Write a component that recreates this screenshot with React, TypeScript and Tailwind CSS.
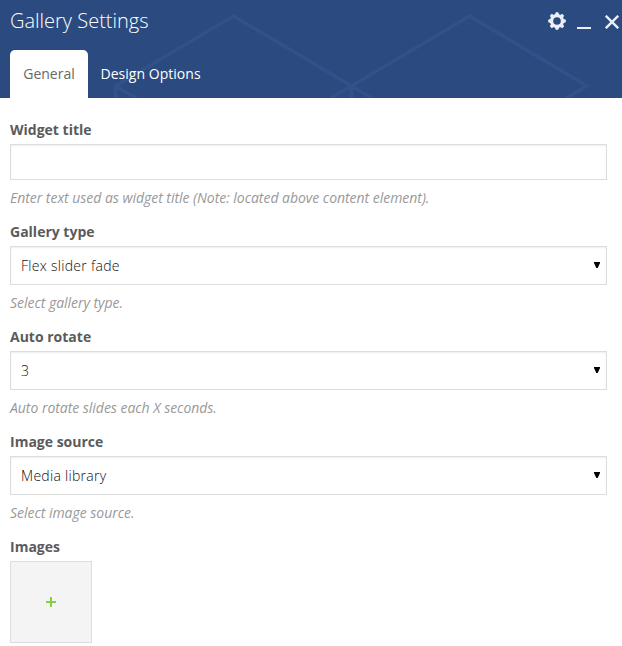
import React from 'react';

type FieldProps = { label: string; hint?: string; children: React.ReactNode };

function Field({ label, hint, children }: FieldProps) {
  return (
    <div>
      <div className="mb-[5px] h-[18px] text-sm leading-[18px] font-bold text-[#5b5b5b]">{label}</div>
      {children}
      {hint && (
        <p className="mt-[9px] h-[18px] text-sm leading-[18px] tracking-[-0.03px] whitespace-nowrap text-[#999999] italic">{hint}</p>
      )}
    </div>
  );
}

const boxClass = 'w-full border border-[#dddddd] bg-white shadow-[inset_0_1px_2px_rgba(0,0,0,0.07)]';

function SelectBox({ value }: { value: string }) {
  return (
    <div className={`${boxClass} flex h-[39px] items-center justify-between pr-[6px] pl-[10px]`}>
      <span className="text-sm leading-[18px] font-light tracking-[0.29px] text-[#111111]">{value}</span>
      <svg width="6" height="6" viewBox="0 0 6 6" className="mb-[2px]">
        <path d="M0 0h6v1L3.7 6H2.3L0 1z" fill="#000" />
      </svg>
    </div>
  );
}

function Gear() {
  const teeth = [0, 45, 90, 135, 180, 225, 270, 315];
  return (
    <svg width="18" height="18" viewBox="-9 -9 18 18" fill="#ebeef5">
      <circle r="5.4" fill="none" stroke="#ebeef5" strokeWidth="3.2" />
      {teeth.map((a) => (
        <path key={a} d="M-2.2 -6 L-1.3 -8.8 H1.3 L2.2 -6z" transform={`rotate(${a})`} />
      ))}
    </svg>
  );
}

export default function App() {
  return (
    <div className="h-[646px] w-[622px] overflow-hidden bg-white font-['Open_Sans',sans-serif]">
      <header className="relative flex h-[98px] flex-col justify-between overflow-hidden bg-[#2b4b80]">
        <svg className="absolute inset-0" width="622" height="98" fill="none" stroke="#315187" strokeWidth="3.6">
          <path d="M115.5 98V86L233.5 16L351.5 86V98M115.5 86L136 98M331 98L351.5 86L469.5 16L587 86L566 98M351.5 86L372 98" />
        </svg>
        <div className="relative flex items-start justify-between pl-[10px]">
          <h1 className="pt-[7px] text-xl leading-[28px] font-light text-white">Gallery Settings</h1>
          <div className="flex pt-[12px] pr-[3px]">
            <Gear />
            <svg className="ml-[11px]" width="14" height="18">
              <path d="M0 15h14v2H0z" fill="#ebeef5" />
            </svg>
            <svg className="mt-[3px] ml-[14px]" width="14" height="14" stroke="#ebeef5" strokeWidth="2.4">
              <path d="M.8.8l12.4 12.4M13.2.8L.8 13.2" />
            </svg>
          </div>
        </div>
        <nav className="relative flex h-12 pl-[10px] text-sm">
          <div className="flex w-[78px] items-center justify-center rounded-t-[5px] bg-white text-[#686868]">
            General
          </div>
          <div className="flex items-center pl-[12.5px] tracking-[0.03px] text-white">Design Options</div>
        </nav>
      </header>
      <main className="flex w-[607px] flex-col gap-4 pt-[23px] pl-[10px]">
        <Field label="Widget title" hint="Enter text used as widget title (Note: located above content element).">
          <input className={`${boxClass} block h-9 px-[10px] text-sm outline-none`} />
        </Field>
        <Field label="Gallery type" hint="Select gallery type.">
          <SelectBox value="Flex slider fade" />
        </Field>
        <Field label="Auto rotate" hint="Auto rotate slides each X seconds.">
          <SelectBox value="3" />
        </Field>
        <Field label="Image source" hint="Select image source.">
          <SelectBox value="Media library" />
        </Field>
        <Field label="Images">
          <button className="flex h-[82px] w-[82px] items-center justify-center border border-[#dddddd] bg-[#f4f4f4]">
            <svg width="10" height="10" fill="#85cf44">
              <path d="M4 0h2v4h4v2H6v4H4V6H0V4h4z" />
            </svg>
          </button>
        </Field>
      </main>
    </div>
  );
}
